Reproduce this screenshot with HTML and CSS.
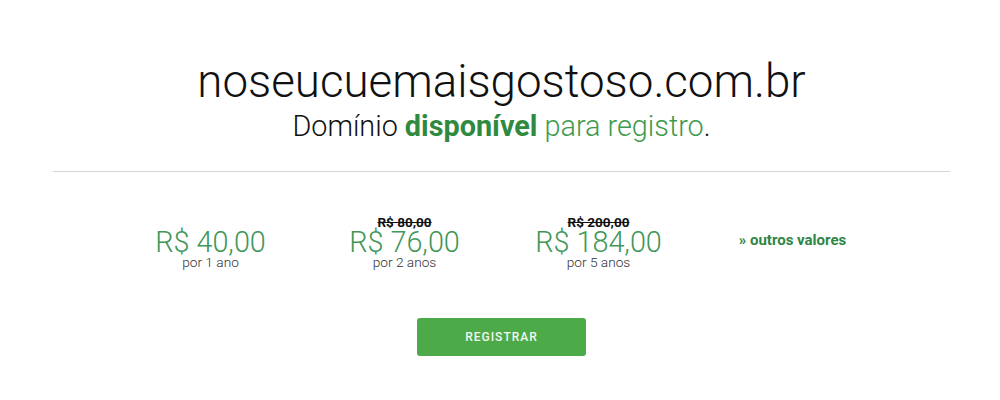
FILE: index.html
```html
<!DOCTYPE html>
<html lang="pt-BR">
<head>
<meta charset="utf-8">
<link rel="stylesheet" href="styles.css">
</head>
<body>
<main class="page">
  <header class="head">
    <h1 class="domain">noseucuemaisgostoso.com.br</h1>
    <p class="status">Domínio <strong class="avail">disponível</strong> <span class="green">para registro</span>.</p>
  </header>
  <hr class="divider">
  <section class="prices">
    <div class="price">
      <div class="old"></div>
      <div class="amount">R$ 40,00</div>
      <div class="period">por 1 ano</div>
    </div>
    <div class="price">
      <div class="old"><s>R$ 80,00</s></div>
      <div class="amount">R$ 76,00</div>
      <div class="period">por 2 anos</div>
    </div>
    <div class="price">
      <div class="old"><s>R$ 200,00</s></div>
      <div class="amount">R$ 184,00</div>
      <div class="period">por 5 anos</div>
    </div>
    <div class="price more">
      <a class="more-link" href="#">» outros valores</a>
    </div>
  </section>
  <div class="actions">
    <button class="btn">REGISTRAR</button>
  </div>
</main>
</body>
</html>
```
FILE: styles.css
```css
html, body {
  margin: 0;
  padding: 0;
  background: #fff;
}
body {
  font-family: Roboto, "Liberation Sans", sans-serif;
  color: #222;
}
.page {
  width: 897px;
  margin: 0 auto;
  padding-left: 3px;
}
.head {
  text-align: center;
  padding-top: 56px;
}
.domain {
  margin: 0;
  font-weight: 300;
  font-size: 45.7px;
  line-height: 52px;
  color: #111;
}
.status {
  margin: 1px 0 0;
  font-weight: 300;
  font-size: 28.8px;
  line-height: 34px;
  color: #111;
}
.avail {
  font-weight: 700;
  color: #2f8a3f;
}
.green {
  color: #3d9a4d;
}
.divider {
  border: 0;
  border-top: 1px solid #d6d6d6;
  margin: 28px 0 0;
}
.prices {
  width: 776px;
  margin: 43px auto 0;
  display: grid;
  grid-template-columns: repeat(4, 1fr);
  align-items: center;
}
.price {
  text-align: center;
}
.old {
  height: 15px;
  font-size: 13.5px;
  line-height: 15px;
  font-weight: 700;
  color: #111;
}
.amount {
  font-size: 28.8px;
  line-height: 25px;
  font-weight: 300;
  color: #409758;
}
.period {
  font-size: 13.7px;
  line-height: 15px;
  font-weight: 300;
  color: #333;
}
.more {
  padding-bottom: 6px;
}
.more-link {
  font-size: 15px;
  font-weight: 700;
  color: #2f8544;
  text-decoration: none;
}
.actions {
  display: flex;
  justify-content: center;
  margin-top: 48px;
}
.btn {
  width: 169px;
  height: 38px;
  border: 0;
  border-radius: 3px;
  background: #4caa48;
  color: #f2f7f0;
  font-family: Roboto, "Liberation Sans", sans-serif;
  font-size: 12px;
  font-weight: 500;
  letter-spacing: 1px;
}
```
